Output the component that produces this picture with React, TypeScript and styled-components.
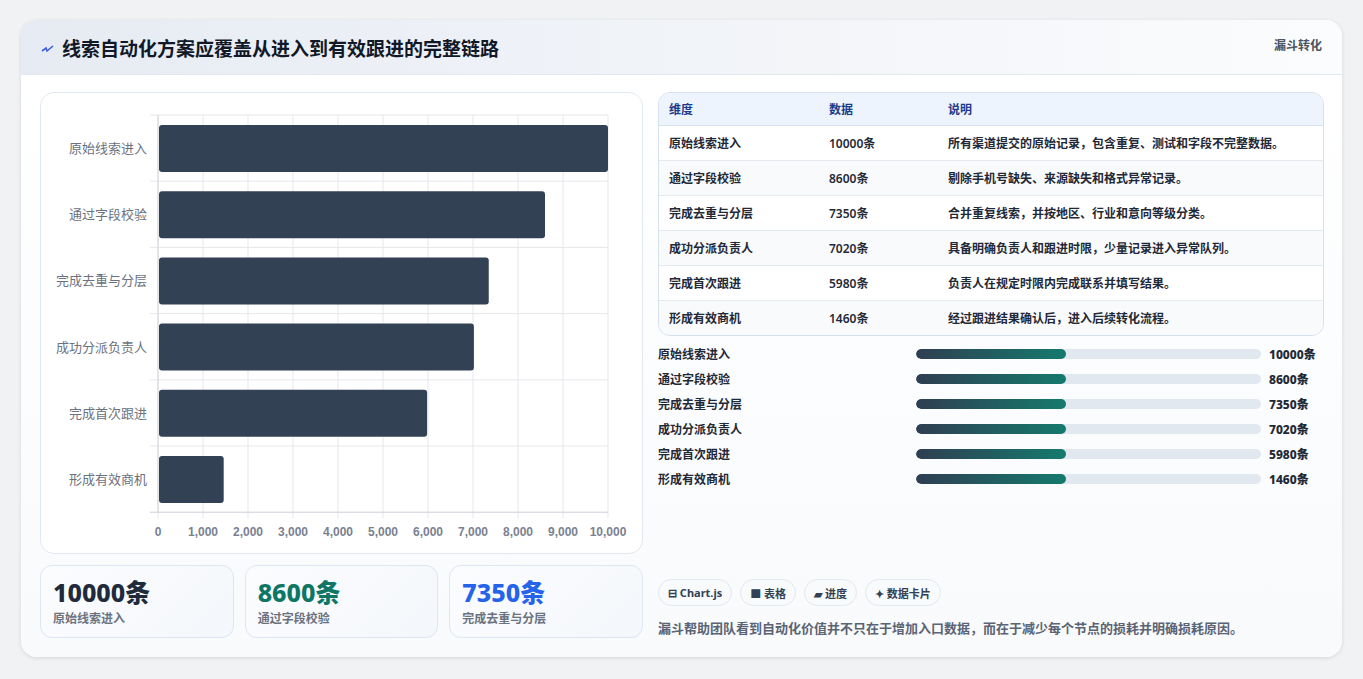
import React from 'react'
import styled, { createGlobalStyle } from 'styled-components'

const GlobalStyle = createGlobalStyle`
  body {
    margin: 0;
    background: #f1f2f4;
    font-family: "Noto Sans", "Noto Sans CJK SC", sans-serif;
  }
`

const rows = [
  { label: '原始线索进入', value: 10000, note: '所有渠道提交的原始记录，包含重复、测试和字段不完整数据。' },
  { label: '通过字段校验', value: 8600, note: '剔除手机号缺失、来源缺失和格式异常记录。' },
  { label: '完成去重与分层', value: 7350, note: '合并重复线索，并按地区、行业和意向等级分类。' },
  { label: '成功分派负责人', value: 7020, note: '具备明确负责人和跟进时限，少量记录进入异常队列。' },
  { label: '完成首次跟进', value: 5980, note: '负责人在规定时限内完成联系并填写结果。' },
  { label: '形成有效商机', value: 1460, note: '经过跟进结果确认后，进入后续转化流程。' },
]

const Page = styled.div`
  padding: 20px 20px 22px 21px;
  background: #f1f2f4;
`

const Card = styled.div`
  width: 1321px;
  height: 637px;
  background: #fff;
  border-radius: 16px;
  box-shadow: 0 1px 4px rgba(15, 23, 42, 0.12);
  overflow: hidden;
  display: flex;
  flex-direction: column;
`

const Header = styled.div`
  height: 55px;
  box-sizing: border-box;
  border-bottom: 1px solid #e3e8f0;
  background: linear-gradient(90deg, #e6ebf3 0%, #f3f5f9 60%, #fbfcfd 100%);
  display: flex;
  align-items: flex-start;
  justify-content: space-between;
  padding: 14px 20px 0 20px;
`

const Title = styled.h1`
  margin: 0;
  font-size: 19px;
  font-weight: 700;
  color: #111827;
  display: flex;
  align-items: center;
  gap: 8px;
  line-height: 30px;
`

const Tag = styled.span`
  font-size: 12px;
  font-weight: 700;
  color: #4b5563;
  margin-top: 2px;
`

const Body = styled.div`
  flex: 1;
  display: grid;
  grid-template-columns: 603px 666px;
  gap: 15px;
  padding: 17px 18px 18px 19px;
  background: linear-gradient(180deg, #ffffff, #f8fafc);
`

const Col = styled.div`
  display: flex;
  flex-direction: column;
  gap: 11px;
`

const Panel = styled.div`
  height: 462px;
  box-sizing: border-box;
  border: 1px solid #e2e8f0;
  border-radius: 14px;
  background: #fff;
`

const Stats = styled.div`
  display: grid;
  grid-template-columns: repeat(3, 1fr);
  gap: 11px;
`

const Stat = styled.div`
  height: 73px;
  box-sizing: border-box;
  border: 1px solid #dde6f3;
  border-radius: 12px;
  background: linear-gradient(135deg, #fbfcfe, #f4f7fb);
  padding: 10px 12px;
`

const StatValue = styled.div<{ $color: string }>`
  font-size: 25px;
  font-weight: 800;
  color: ${p => p.$color};
  line-height: 32px;
`

const StatLabel = styled.div`
  font-size: 12px;
  font-weight: 600;
  color: #6b7280;
  margin-top: 1px;
`

const Table = styled.table`
  width: 100%;
  border-collapse: separate;
  border-spacing: 0;
  border: 1px solid #d6e0ee;
  border-radius: 12px;
  overflow: hidden;
  font-size: 12px;
  font-weight: 600;
  color: #1f2937;
`

const Th = styled.th`
  text-align: left;
  height: 32px;
  padding: 0 10px;
  background: #edf4fd;
  color: #1e3a8a;
  border-bottom: 1px solid #d6e0ee;
`

const Td = styled.td<{ $alt: boolean }>`
  height: 34px;
  padding: 0 10px;
  background: ${p => (p.$alt ? '#f8fafc' : '#fff')};
  border-bottom: 1px solid #e5eaf1;
  tr:last-child & {
    border-bottom: 0;
  }
`

const ProgressList = styled.div`
  margin-top: 9px;
  display: flex;
  flex-direction: column;
  gap: 7px;
`

const ProgressRow = styled.div`
  display: grid;
  grid-template-columns: 250px 345px auto;
  align-items: center;
  gap: 8px;
  height: 18px;
  font-size: 12px;
  font-weight: 600;
  color: #1f2937;
`

const Track = styled.div`
  height: 10px;
  border-radius: 5px;
  background: #e2e8f0;
  overflow: hidden;
`

const Fill = styled.div`
  height: 100%;
  border-radius: 5px;
  background: linear-gradient(90deg, #2f3e52, #157a6e);
`

const Value = styled.span`
  font-weight: 800;
  color: #1f2937;
`

const Footer = styled.div`
  margin-top: auto;
  display: flex;
  flex-direction: column;
  gap: 12px;
  padding-bottom: 2px;
`

const Chips = styled.div`
  display: flex;
  gap: 8px;
`

const Chip = styled.span`
  height: 27px;
  box-sizing: border-box;
  padding: 0 9px;
  border: 1px solid #e2e8f0;
  border-radius: 14px;
  background: #f8fafc;
  font-size: 11px;
  font-weight: 700;
  color: #334155;
  display: flex;
  align-items: center;
  gap: 3px;
`

const Note = styled.p`
  margin: 0;
  font-size: 13px;
  font-weight: 600;
  color: #5b6474;
`

const Chart = () => {
  const x0 = 117
  const w = 450
  const y0 = 22
  const band = 66.2
  const ticks = [0, 1000, 2000, 3000, 4000, 5000, 6000, 7000, 8000, 9000, 10000]
  return (
    <svg width="601" height="460" style={{ display: 'block' }}>
      {ticks.map(t => (
        <line key={t} x1={x0 + (t / 10000) * w} x2={x0 + (t / 10000) * w} y1={y0} y2={y0 + band * 6 + 6} stroke="#e5e7eb" />
      ))}
      {rows.map((_, i) => (
        <line key={i} x1={x0 - 8} x2={x0 + w} y1={y0 + band * i} y2={y0 + band * i} stroke="#e5e7eb" />
      ))}
      <line x1={x0} x2={x0} y1={y0} y2={y0 + band * 6} stroke="#d1d5db" />
      <line x1={x0 - 8} x2={x0 + w} y1={y0 + band * 6} y2={y0 + band * 6} stroke="#cbd0d8" />
      {rows.map((r, i) => (
        <g key={r.label}>
          <rect x={x0 + 1} y={y0 + band * i + 10} width={(r.value / 10000) * w - 1} height={47} rx={3} fill="#334155" />
          <text x={x0 - 11} y={y0 + band * i + 38} textAnchor="end" fontSize="13" fill="#6b7280">
            {r.label}
          </text>
        </g>
      ))}
      {ticks.map(t => (
        <text key={t} x={x0 + (t / 10000) * w} y={y0 + band * 6 + 24} textAnchor="middle" fontSize="12" fontWeight="700" fill="#7a8190" fontFamily="Liberation Sans, sans-serif">
          {t.toLocaleString('en-US')}
        </text>
      ))}
    </svg>
  )
}

export default function App() {
  return (
    <Page>
      <GlobalStyle />
      <Card>
        <Header>
          <Title>
            <svg width="13" height="10" viewBox="0 0 13 10">
              <path d="M1 7 L5 4 L6 7 L12 2" stroke="#3b5bdb" strokeWidth="1.6" fill="none" />
            </svg>
            线索自动化方案应覆盖从进入到有效跟进的完整链路
          </Title>
          <Tag>漏斗转化</Tag>
        </Header>
        <Body>
          <Col>
            <Panel>
              <Chart />
            </Panel>
            <Stats>
              <Stat>
                <StatValue $color="#1f2a3c">10000条</StatValue>
                <StatLabel>原始线索进入</StatLabel>
              </Stat>
              <Stat>
                <StatValue $color="#0f7666">8600条</StatValue>
                <StatLabel>通过字段校验</StatLabel>
              </Stat>
              <Stat>
                <StatValue $color="#2563eb">7350条</StatValue>
                <StatLabel>完成去重与分层</StatLabel>
              </Stat>
            </Stats>
          </Col>
          <Col style={{ gap: 0 }}>
            <Table>
              <thead>
                <tr>
                  <Th style={{ width: 140 }}>维度</Th>
                  <Th style={{ width: 99 }}>数据</Th>
                  <Th>说明</Th>
                </tr>
              </thead>
              <tbody>
                {rows.map((r, i) => (
                  <tr key={r.label}>
                    <Td $alt={i % 2 === 1}>{r.label}</Td>
                    <Td $alt={i % 2 === 1}>{r.value}条</Td>
                    <Td $alt={i % 2 === 1}>{r.note}</Td>
                  </tr>
                ))}
              </tbody>
            </Table>
            <ProgressList>
              {rows.map(r => (
                <ProgressRow key={r.label}>
                  <span>{r.label}</span>
                  <Track>
                    <Fill style={{ width: '43.5%' }} />
                  </Track>
                  <Value>{r.value}条</Value>
                </ProgressRow>
              ))}
            </ProgressList>
            <Footer>
              <Chips>
                <Chip>⊟ Chart.js</Chip>
                <Chip>■ 表格</Chip>
                <Chip>▰ 进度</Chip>
                <Chip>✦ 数据卡片</Chip>
              </Chips>
              <Note>漏斗帮助团队看到自动化价值并不只在于增加入口数据，而在于减少每个节点的损耗并明确损耗原因。</Note>
            </Footer>
          </Col>
        </Body>
      </Card>
    </Page>
  )
}
